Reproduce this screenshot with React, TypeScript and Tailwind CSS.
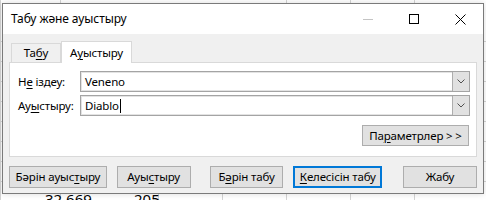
// App.tsx
// Діалог "Табу және ауыстыру" поверх фрагмента таблиці.

import React from 'react'

const font = { fontFamily: '"Noto Sans", "Open Sans", sans-serif' }

// Підкреслена літера (мнемоніка)
function U({ children }: { children: React.ReactNode }) {
    return <span className="underline underline-offset-2 decoration-1">{children}</span>
}

function Btn({ w, focused, children }: { w: string; focused?: boolean; children: React.ReactNode }) {
    return (
        <button
            type="button"
            className={`${w} h-[22px] flex items-center justify-center text-[11.5px] tracking-[-0.15px] text-black bg-[#e1e1e1]
                ${focused ? 'border-2 border-[#0078d7]' : 'border border-[#adadad]'}`}
        >
            {children}
        </button>
    )
}

function Combo({ value, caret }: { value: string; caret?: boolean }) {
    return (
        <div className="flex-1 h-[21px] flex border border-[#a4a4a4] bg-white">
            <div className="flex-1 flex items-center pl-[3px] text-[11.5px] text-black border border-[#e3e3e3] border-r-0">
                {value}
                {caret && <span className="inline-block w-px h-[14px] bg-black ml-px" />}
            </div>
            <div className="w-[17px] flex items-center justify-center bg-[#e1e1e1] border-l border-[#adadad]">
                <svg width="8" height="5" viewBox="0 0 8 5">
                    <path d="M0.5 0.5 L4 4 L7.5 0.5" fill="none" stroke="#505050" strokeWidth="1" />
                </svg>
            </div>
        </div>
    )
}

export default function App() {
    return (
        <div className="relative w-[486px] h-[200px] overflow-hidden bg-white" style={font}>
            {/* ── Таблиця на фоні ── */}
            <div className="absolute inset-0">
                <div className="absolute top-0 bottom-0 left-[60px] w-px bg-[#d4d4d4]" />
                <div className="absolute top-0 bottom-0 left-[286px] w-px bg-[#d4d4d4]" />
                <div className="absolute top-0 bottom-0 left-[350px] w-px bg-[#d4d4d4]" />
                <div className="absolute top-0 bottom-0 left-[414px] w-px bg-[#d4d4d4]" />
                <div className="absolute top-0 bottom-0 left-[0px] w-px bg-[#d4d4d4]" />
                <div className="absolute left-0 right-0 top-[41px] h-px bg-[#d4d4d4]" />
                <div className="absolute left-0 right-0 top-[61px] h-px bg-[#d4d4d4]" />
                <div className="absolute left-0 right-0 top-[81px] h-px bg-[#d4d4d4]" />
                <div className="absolute left-0 right-0 top-[101px] h-px bg-[#d4d4d4]" />
                <div className="absolute left-0 right-0 top-[121px] h-px bg-[#d4d4d4]" />
                <div className="absolute left-0 right-0 top-[141px] h-px bg-[#d4d4d4]" />
                <div className="absolute left-0 right-0 top-[161px] h-px bg-[#d4d4d4]" />
                <div className="absolute left-0 right-0 top-[181px] h-px bg-[#d4d4d4]" />
                <div className="absolute top-[188px] left-[84px] w-px h-[12px] bg-[#d4d4d4]" />
                <div className="absolute top-[188px] left-[158px] w-px h-[12px] bg-[#d4d4d4]" />
                <div className="absolute top-[188px] left-[222px] w-px h-[12px] bg-[#d4d4d4]" />
                <span className="absolute top-[192px] left-[45px] text-[15px] text-black leading-none">32 669</span>
                <span className="absolute top-[192px] left-[134px] text-[15px] text-black leading-none">205</span>
            </div>

            {/* ── Вікно діалогу ── */}
            <div className="absolute left-[2px] top-[3px] w-[482px] h-[191px] flex flex-col border border-[#7a7a7a] bg-[#f0f0f0] shadow-[0_0_6px_rgba(0,0,0,0.15)]">
                {/* Заголовок */}
                <div className="h-[30px] flex items-center bg-white flex-none">
                    <span className="pl-[8px] text-[12px] tracking-[-0.1px] text-black">Табу және ауыстыру</span>
                    <div className="ml-auto flex items-center h-full">
                        <div className="w-[46px] h-full flex items-center justify-center">
                            <span className="block w-[10px] h-px bg-[#c4c4c4]" />
                        </div>
                        <div className="w-[46px] h-full flex items-center justify-center">
                            <span className="block w-[10px] h-[10px] border border-black" />
                        </div>
                        <div className="w-[46px] h-full flex items-center justify-center">
                            <svg width="11" height="11" viewBox="0 0 11 11">
                                <path d="M0.5 0.5 L10.5 10.5 M10.5 0.5 L0.5 10.5" stroke="#000" strokeWidth="1" />
                            </svg>
                        </div>
                    </div>
                </div>

                {/* Тіло */}
                <div className="flex-1 flex flex-col px-[6px] pt-[7px] pb-[5px] text-[11.5px] tracking-[-0.15px]">
                    {/* Вкладки */}
                    <div className="flex items-end h-[21px] pl-[2px] relative z-10">
                        <div className="w-[50px] h-[19px] flex items-center justify-center text-black border border-b-0 border-[#d9d9d9] bg-[#f0f0f0]">
                            Та<U>б</U>у
                        </div>
                        <div className="w-[71px] h-[22px] -mb-px flex items-center justify-center text-black border border-b-0 border-[#d9d9d9] bg-white">
                            А<U>у</U>ыстыру
                        </div>
                    </div>

                    {/* Панель */}
                    <div className="h-[95px] flex flex-col border border-[#d9d9d9] bg-white pl-[8px] pr-[6px] pt-[8px] gap-[3px]">
                        <div className="flex items-center">
                            <span className="w-[62px] text-black">Н<U>е</U> іздеу:</span>
                            <Combo value="Veneno" />
                        </div>
                        <div className="flex items-center">
                            <span className="w-[62px] text-black">Ау<U>ы</U>стыру:</span>
                            <Combo value="Diablo" caret />
                        </div>
                        <div className="flex justify-end mt-[6px] pr-[1px]">
                            <button type="button" className="w-[107px] h-[21px] flex items-center justify-center text-black bg-[#e1e1e1] border border-[#adadad]">
                                Па<U>р</U>аметрлер &gt; &gt;
                            </button>
                        </div>
                    </div>

                    {/* Кнопки */}
                    <div className="flex items-center mt-[9px]">
                        <Btn w="w-[98px]">Бәрін ауыс<U>т</U>ыру</Btn>
                        <div className="w-[10px]" />
                        <Btn w="w-[74px]">Ауы<U>с</U>тыру</Btn>
                        <div className="w-[19px]" />
                        <Btn w="w-[74px]">Б<U>ә</U>рін табу</Btn>
                        <div className="w-[10px]" />
                        <Btn w="w-[89px]" focused><U>К</U>елесісін табу</Btn>
                        <div className="w-[21px]" />
                        <Btn w="w-[74px]">Жабу</Btn>
                    </div>
                </div>
            </div>
        </div>
    )
}
